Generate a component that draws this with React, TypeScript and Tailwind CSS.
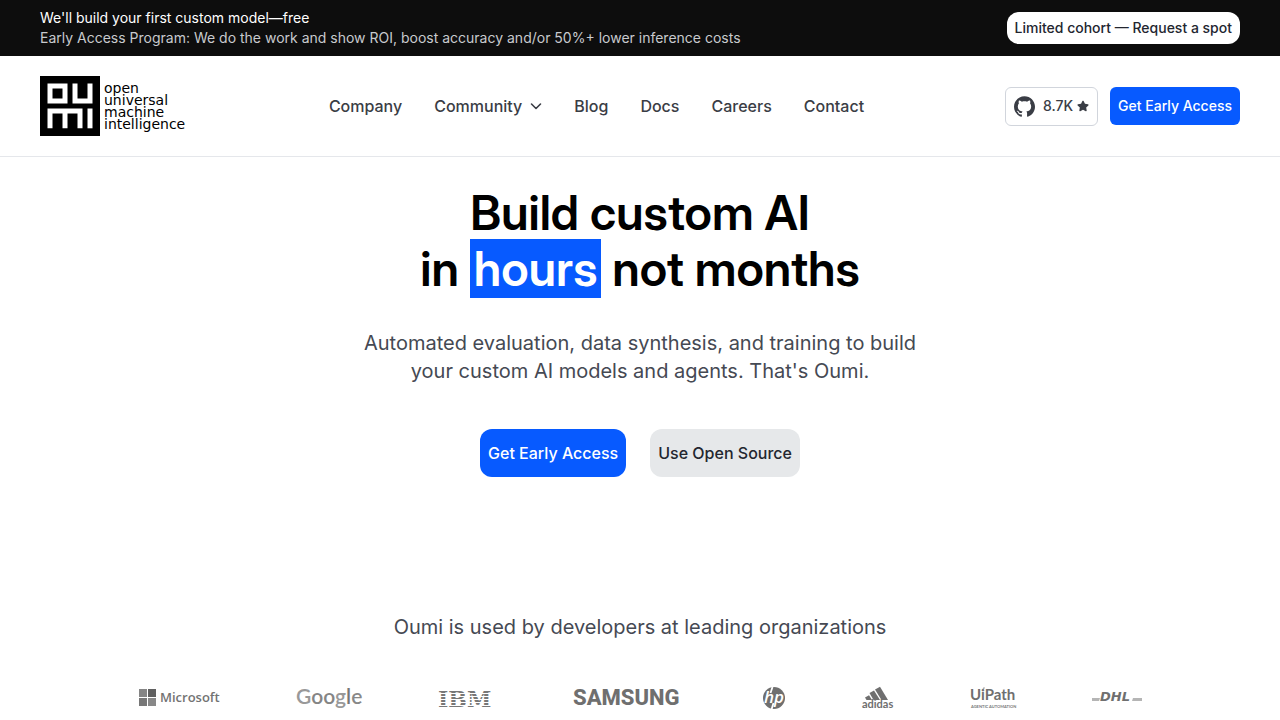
import React from 'react';
import { FaStar } from 'react-icons/fa';
import { SiGithub } from 'react-icons/si';

const links = ['Company', 'Community', 'Blog', 'Docs', 'Careers', 'Contact'];

const ibmGaps = [7, 10, 13, 16, 19];

const BrandMark: React.FC = () => (
  <svg className="size-[60px] shrink-0" viewBox="0 0 60 60" aria-hidden="true">
    <rect width="60" height="60" fill="#000" />
    <g fill="#fff">
      <path fillRule="evenodd" d="M7.5 7.5H27.5V27.5H7.5zM12.5 12.5V22.5H22.5V12.5z" />
      <path d="M32.5 7.5H37.5V22.5H47.5V7.5H52.5V27.5H32.5z" />
      <path d="M7.5 32.5H42.5V52.3H37.5V37.5H27.5V52.3H22.5V37.5H12.5V52.3H7.5z" />
      <path d="M47.5 32.5H52.5V52.3H47.5z" />
    </g>
  </svg>
);

const Chevron: React.FC = () => (
  <svg className="size-3" viewBox="0 0 12 12" fill="none" stroke="currentColor" strokeWidth="1.6" strokeLinecap="round" strokeLinejoin="round" aria-hidden="true">
    <path d="M1.5 4 6 8.5 10.5 4" />
  </svg>
);

const Microsoft = () => (
  <svg className="h-6 w-20 overflow-visible" viewBox="0 0 80 24" role="img" aria-label="Microsoft">
    <path fill="#858585" d="M0 3h8v8H0z" />
    <path fill="#606060" d="M9 3h8v8H9z" />
    <path fill="#777" d="M0 12h8v8H0z" />
    <path fill="#888" d="M9 12h8v8H9z" />
    <text x="21" y="16" fill="#737373" className="font-['Open_Sans'] text-[13px] font-semibold">Microsoft</text>
  </svg>
);

const Google = () => (
  <svg className="h-6 w-[66px] overflow-visible" viewBox="0 0 66 24" role="img" aria-label="Google">
    <text x="0" y="18" className="font-['Lato'] text-[21px] font-semibold">
      <tspan fill="#999">G</tspan>
      <tspan fill="#858585">oo</tspan>
      <tspan fill="#999">g</tspan>
      <tspan fill="#777">l</tspan>
      <tspan fill="#888">e</tspan>
    </text>
  </svg>
);

const Ibm = () => (
  <svg className="h-6 w-[57px] overflow-visible" viewBox="0 0 57 24" role="img" aria-label="IBM">
    <text x="-1" y="21" fill="#777" className="font-['DejaVu_Serif'] text-[22px] font-bold">IBM</text>
    {ibmGaps.map((y) => (
      <rect key={y} x="-1" y={y} width="57" height="1" fill="#fff" />
    ))}
  </svg>
);

const Samsung = () => (
  <svg className="h-6 w-[105px] overflow-visible" viewBox="0 0 105 24" role="img" aria-label="Samsung">
    <text x="0" y="19" fill="#6f6f6f" className="font-['Roboto'] text-[22px] font-extrabold">SAMSUNG</text>
  </svg>
);

const Hp = () => (
  <svg className="h-6 w-[30px]" viewBox="0 0 30 24" role="img" aria-label="HP">
    <circle cx="19" cy="12" r="11" fill="#6f6f6f" />
    <path d="M17.5 1 15.5 7M18.5 17 16.5 23.5" stroke="#fff" strokeWidth="1.8" />
    <text x="9" y="17" fill="#fff" className="font-['Open_Sans'] text-[17px] font-semibold italic">hp</text>
  </svg>
);

const Adidas = () => (
  <svg className="h-6 w-8 overflow-visible" viewBox="0 0 32 24" role="img" aria-label="Adidas">
    <g fill="#6f6f6f">
      <path d="M13 3.5 18 .8 26 14H19.500z" />
      <path d="M7.5 7 12 4.5 18 14H11.500z" />
      <path d="M3 11.5 7 9.2 10 14H4.500z" />
    </g>
    <text x="0" y="22" fill="#6f6f6f" className="font-['Lato'] text-[11px] font-bold">adidas</text>
  </svg>
);

const UiPath = () => (
  <svg className="h-6 w-11 overflow-visible" viewBox="0 0 44 24" role="img" aria-label="UiPath">
    <path d="M12 3 13.5 1.5" stroke="#aaa" strokeWidth="1.5" />
    <text x="-1" y="14" fill="#6f6f6f" className="font-['Lato'] text-[15px] font-bold">UiPath</text>
    <text x="0" y="22" fill="#777" className="font-['Lato'] text-[4px] font-bold">AGENTIC AUTOMATION</text>
  </svg>
);

const Dhl = () => (
  <svg className="h-6 w-[50px] overflow-visible" viewBox="0 0 50 24" role="img" aria-label="DHL">
    <path fill="#b5b5b5" d="M0 12h8l-1 3H0zM41 12h9v3H40z" />
    <text x="8" y="15" fill="#6f6f6f" className="font-['DejaVu_Sans'] text-[13px] font-bold italic">DHL</text>
  </svg>
);

const Banner: React.FC = () => (
  <div className="flex h-14 items-center justify-between bg-[#0d0d0d] px-10">
    <div className="text-sm leading-5">
      <p className="text-white">We'll build your first custom model—free</p>
      <p className="text-[#c8cacd]">
        Early Access Program: We do the work and show ROI, boost accuracy and/or 50%+ lower inference costs
      </p>
    </div>
    <a href="#spot" className="rounded-xl bg-white px-2 py-1.5 text-sm font-medium text-[#23262f]">
      Limited cohort — Request a spot
    </a>
  </div>
);

const Header: React.FC = () => (
  <header className="flex items-center justify-between border-b border-gray-200 px-10 py-5">
    <a href="#home" className="flex w-[148px] items-center gap-1">
      <BrandMark />
      <span className="font-['DejaVu_Sans'] text-[14px] leading-[12px] text-black">
        open<br />universal<br />machine<br />intelligence
      </span>
    </a>
    <nav className="flex items-center gap-8 font-medium text-[#3a3d45]">
      {links.map((label) =>
        label === 'Community' ? (
          <button key={label} className="flex items-center gap-2">
            {label}
            <Chevron />
          </button>
        ) : (
          <a key={label} href={`#${label.toLowerCase()}`}>{label}</a>
        )
      )}
    </nav>
    <div className="flex items-center gap-3 text-sm font-medium">
      <a href="#github" className="flex h-[39px] items-center rounded-md border border-gray-300 px-2 text-[#3a3d45]">
        <SiGithub size={21} />
        <span className="ml-2">8.7K</span>
        <FaStar size={12} className="ml-1" />
      </a>
      <button className="h-[38px] rounded-md bg-[#075aff] px-2 text-white">Get Early Access</button>
    </div>
  </header>
);

const App: React.FC = () => {
  return (
    <div className="bg-white font-['Inter',sans-serif]">
      <Banner />
      <Header />
      <main className="text-center">
        <section className="pt-7">
          <h1 className="font-['Inter_Display','Inter',sans-serif] text-5xl leading-[56px] font-semibold text-black">
            Build custom AI<br />
            in <span className="bg-[#075aff] px-1 text-white">hours</span> not months
          </h1>
          <p className="mt-8 text-xl leading-7 text-[#454953]">
            Automated evaluation, data synthesis, and training to build<br />
            your custom AI models and agents. That's Oumi.
          </p>
          <div className="mt-11 flex justify-center gap-6 font-medium">
            <button className="h-12 rounded-xl bg-[#075aff] px-2 text-white">Get Early Access</button>
            <button className="h-12 rounded-xl bg-[#e6e8ea] px-2 text-[#23262f]">Use Open Source</button>
          </div>
        </section>
        <section className="pt-34">
          <p className="text-xl leading-7 text-[#454953]">Oumi is used by developers at leading organizations</p>
          <div className="mt-[45px] flex items-center justify-center gap-[77px] pl-px">
            <Microsoft />
            <Google />
            <Ibm />
            <Samsung />
            <Hp />
            <Adidas />
            <UiPath />
            <Dhl />
          </div>
        </section>
      </main>
    </div>
  );
};

export default App;
